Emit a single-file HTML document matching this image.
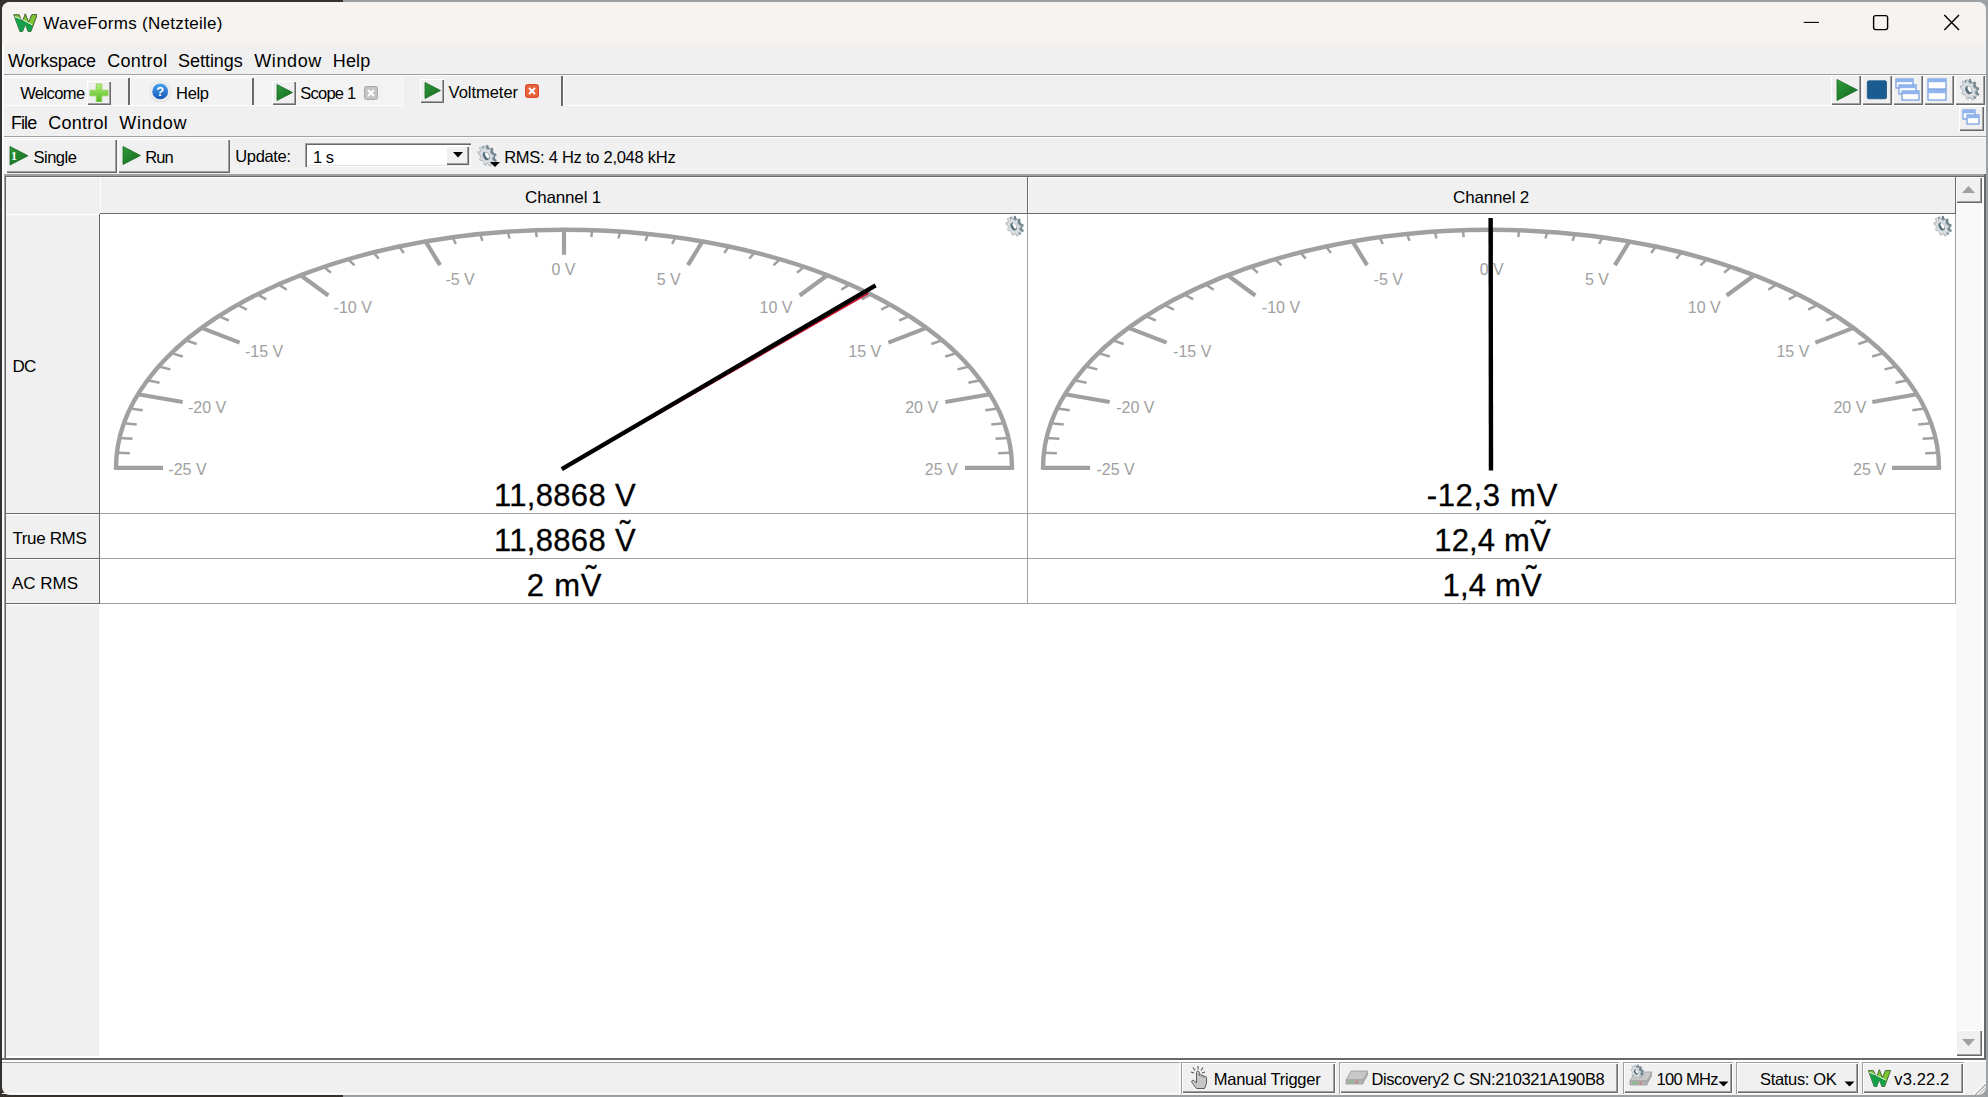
<!DOCTYPE html>
<html lang="de"><head><meta charset="utf-8"><title>WaveForms (Netzteile)</title>
<style>
html,body{margin:0;padding:0}
body{width:1988px;height:1097px;overflow:hidden;position:relative;background:#9da1a4;font-family:"Liberation Sans",sans-serif;}
.a{position:absolute;box-sizing:border-box}
.t{position:absolute;white-space:pre;line-height:1;font-family:"Liberation Sans",sans-serif}
.rs{box-shadow:inset 1px 1px 0 #fff,inset -1px -1px 0 #696969,inset -2px -2px 0 #a0a0a0}
.rs1{box-shadow:inset 1px 1px 0 #fff,inset -1px -1px 0 #696969}
.sk1{box-shadow:inset 1px 1px 0 #a0a0a0,inset -1px -1px 0 #fff}
.sk{box-shadow:inset 1px 1px 0 #a0a0a0,inset 2px 2px 0 #696969,inset -1px -1px 0 #fff,inset -2px -2px 0 #e3e3e3}
.td{position:absolute;letter-spacing:0}
svg text{font-family:"Liberation Sans",sans-serif}
</style></head>
<body>
<div class="a " style="left:0px;top:0px;width:343px;height:1097px;background:#37312d;"></div>
<div class="a " style="left:2px;top:2px;width:1984px;height:1093px;background:#f0f0f0;border-radius:8px;"></div>
<div class="a " style="left:2px;top:2px;width:1984px;height:42px;background:#f6f3f1;border-radius:8px 8px 0 0;"></div>
<svg class="a" style="left:12.5px;top:12.8px" width="24.7" height="19" viewBox="-0.5 -0.5 24.7 19"><defs><clipPath id="wc1"><polygon points="0.3,1.2 5.6,1.2 8.7,8.6 11.85,0.2 15.1,8.6 18.3,1.2 23.7,1.0 17.4,18 14.6,18 11.85,10.6 9.1,18 6.4,18"/></clipPath></defs><polygon points="0.3,1.2 5.6,1.2 8.7,8.6 11.85,0.2 15.1,8.6 18.3,1.2 23.7,1.0 17.4,18 14.6,18 11.85,10.6 9.1,18 6.4,18" fill="#7cc52f" stroke="#44603a" stroke-width="1" stroke-linejoin="round"/><g clip-path="url(#wc1)"><polygon points="0,3.2 3.8,4.2 9.5,6.6 18.5,11.4 18.5,19 0,19" fill="#14a04a"/><polyline points="0,3.0 3.8,4.0 9.5,6.4 18.5,11.2" stroke="#fff" stroke-width="0.9" fill="none"/></g></svg>
<span class="t" style="left:43.30px;top:15.00px;font-size:17px;color:#000;letter-spacing:0.303px;">WaveForms (Netzteile)</span>
<svg class="a" style="left:1795px;top:8px" width="180" height="30" viewBox="0 0 180 30"><line x1="8.7" y1="14.4" x2="24" y2="14.4" stroke="#000" stroke-width="1.1"/><rect x="78.6" y="7.6" width="14" height="14" rx="2" fill="none" stroke="#000" stroke-width="1.4"/><path d="M149.3 7.1 L164 21.9 M164 7.1 L149.3 21.9" stroke="#000" stroke-width="1.4" fill="none"/></svg>
<span class="t" style="left:8.10px;top:51.80px;font-size:18px;color:#000;letter-spacing:-0.210px;">Workspace</span>
<span class="t" style="left:107.20px;top:51.80px;font-size:18px;color:#000;letter-spacing:0.331px;">Control</span>
<span class="t" style="left:178.00px;top:51.80px;font-size:18px;color:#000;letter-spacing:-0.032px;">Settings</span>
<span class="t" style="left:254.20px;top:51.80px;font-size:18px;color:#000;letter-spacing:0.618px;">Window</span>
<span class="t" style="left:332.70px;top:51.80px;font-size:18px;color:#000;letter-spacing:0.196px;">Help</span>
<div class="a " style="left:2px;top:74px;width:1984px;height:1px;background:#a0a0a0;"></div>
<div class="a " style="left:2px;top:75px;width:1984px;height:1px;background:#fff;"></div>
<div class="a " style="left:4px;top:77px;width:399px;height:1px;background:#fff;"></div>
<div class="a " style="left:7px;top:78px;width:396px;height:27px;background:#f2f2f2;"></div>
<span class="t" style="left:20.20px;top:85.00px;font-size:16.5px;color:#000;letter-spacing:-0.597px;">Welcome</span>
<div class="a rs" style="left:87px;top:81px;width:24px;height:24px;background:#f0f0f0;"></div>
<svg class="a" style="left:89px;top:83px" width="20" height="19" viewBox="0 0 20 19"><defs><linearGradient id="gp" x1="0" y1="0" x2="0" y2="1"><stop offset="0" stop-color="#b6ec7a"/><stop offset="1" stop-color="#4fb81e"/></linearGradient></defs><path d="M7.2 1 h5.6 v6.2 h6.2 v5.6 h-6.2 v6.2 h-5.6 v-6.2 h-6.2 v-5.6 h6.2z" fill="url(#gp)" stroke="#8fd455" stroke-width="0.9" stroke-linejoin="round"/></svg>
<div class="a " style="left:128px;top:78px;width:2px;height:27px;background:#696969;"></div>
<div class="a " style="left:130px;top:78px;width:1px;height:27px;background:#fff;"></div>
<svg class="a" style="left:149px;top:80px" width="23" height="23" viewBox="0 0 23 23"><defs><linearGradient id="gh" x1="0" y1="0" x2="0" y2="1"><stop offset="0" stop-color="#4aa4ee"/><stop offset="1" stop-color="#1656b8"/></linearGradient></defs><circle cx="11.4" cy="11.6" r="11" fill="#e4e4e4"/><circle cx="11.4" cy="11" r="10" fill="#efefef"/><circle cx="11.2" cy="11.4" r="7.9" fill="url(#gh)"/><text x="11.2" y="16.2" font-size="13" font-weight="bold" fill="#fff" text-anchor="middle">?</text></svg>
<span class="t" style="left:176.10px;top:85.00px;font-size:16.5px;color:#000;letter-spacing:-0.384px;">Help</span>
<div class="a " style="left:252px;top:78px;width:2px;height:27px;background:#696969;"></div>
<div class="a " style="left:254px;top:78px;width:1px;height:27px;background:#fff;"></div>
<div class="a " style="left:254px;top:77px;width:149px;height:29px;background:#f3f3f3;box-shadow:inset -1px -1px 0 #fafafa;"></div>
<div class="a rs" style="left:272px;top:81px;width:24px;height:24px;background:#f0f0f0;"></div>
<svg class="a" style="left:276px;top:84px" width="18" height="18" viewBox="0 0 18 18"><defs><linearGradient id="gg1" x1="0" y1="0" x2="1" y2="1"><stop offset="0" stop-color="#2e9a38"/><stop offset="1" stop-color="#156a20"/></linearGradient></defs><polygon points="1,0.5 16.5,8.5 1,16.5" fill="url(#gg1)" stroke="#1c6a26" stroke-width="0.8" stroke-linejoin="round"/></svg>
<span class="t" style="left:300.30px;top:85.00px;font-size:16.5px;color:#000;letter-spacing:-0.760px;">Scope 1</span>
<svg class="a" style="left:364px;top:86px" width="14" height="14" viewBox="0 0 14 14"><rect x="0.5" y="0.5" width="13" height="13" rx="2" fill="#c4c4c4" stroke="#a8a8a8"/><path d="M4 4 L10 10 M10 4 L4 10" stroke="#fff" stroke-width="2"/></svg>
<div class="a rs" style="left:420px;top:79px;width:24px;height:24px;background:#f0f0f0;"></div>
<svg class="a" style="left:424px;top:82px" width="18" height="18" viewBox="0 0 18 18"><defs><linearGradient id="gg2" x1="0" y1="0" x2="1" y2="1"><stop offset="0" stop-color="#2e9a38"/><stop offset="1" stop-color="#156a20"/></linearGradient></defs><polygon points="1,0.5 16.5,8.5 1,16.5" fill="url(#gg2)" stroke="#1c6a26" stroke-width="0.8" stroke-linejoin="round"/></svg>
<span class="t" style="left:448.60px;top:84.00px;font-size:16.5px;color:#000;letter-spacing:-0.027px;">Voltmeter</span>
<svg class="a" style="left:525px;top:84px" width="14" height="14" viewBox="0 0 14 14"><rect x="0.5" y="0.5" width="13" height="13" rx="2" fill="#e8623c" stroke="#d8482a"/><path d="M4 4 L10 10 M10 4 L4 10" stroke="#fff" stroke-width="2"/></svg>
<div class="a " style="left:561px;top:76px;width:2px;height:30px;background:#696969;"></div>
<div class="a " style="left:563px;top:76px;width:1px;height:30px;background:#fff;"></div>
<div class="a rs" style="left:1831px;top:75px;width:30px;height:30px;background:#f0f0f0;"></div>
<div class="a rs" style="left:1862px;top:75px;width:30px;height:30px;background:#f0f0f0;"></div>
<div class="a rs" style="left:1893px;top:75px;width:30px;height:30px;background:#f0f0f0;"></div>
<div class="a rs" style="left:1924px;top:75px;width:30px;height:30px;background:#f0f0f0;"></div>
<div class="a rs" style="left:1955px;top:75px;width:30px;height:30px;background:#f0f0f0;"></div>
<svg class="a" style="left:1836px;top:79px" width="23" height="23" viewBox="0 0 23 23"><defs><linearGradient id="gg3" x1="0" y1="0" x2="1" y2="1"><stop offset="0" stop-color="#2e9a38"/><stop offset="1" stop-color="#156a20"/></linearGradient></defs><polygon points="1,0.5 21.5,11.0 1,21.5" fill="url(#gg3)" stroke="#1c6a26" stroke-width="0.8" stroke-linejoin="round"/></svg>
<svg class="a" style="left:1866px;top:80px" width="22" height="20" viewBox="0 0 22 20"><rect x="1.3" y="0.8" width="19.2" height="18" rx="1.5" fill="#1b5c90" stroke="#1a5484" stroke-width="0.8"/></svg>
<svg class="a" style="left:1895px;top:78px" width="26" height="25" viewBox="0 0 26 25"><rect x="1" y="1" width="17" height="9" fill="#fff" stroke="#6f9ae0" stroke-width="1.2"/><rect x="1" y="1" width="17" height="3.2" fill="#8fb4ee"/><rect x="4" y="7" width="17" height="9" fill="#fff" stroke="#6f9ae0" stroke-width="1.2"/><rect x="4" y="7" width="17" height="3.2" fill="#8fb4ee"/><rect x="7" y="13" width="17" height="9" fill="#fff" stroke="#6f9ae0" stroke-width="1.2"/><rect x="7" y="13" width="17" height="3.2" fill="#8fb4ee"/></svg>
<svg class="a" style="left:1927px;top:78px" width="22" height="25" viewBox="0 0 22 25"><rect x="1" y="1" width="18" height="10" fill="#fff" stroke="#6f9ae0" stroke-width="1.2"/><rect x="1" y="1" width="18" height="3.2" fill="#8fb4ee"/><rect x="1" y="12" width="18" height="10" fill="#fff" stroke="#6f9ae0" stroke-width="1.2"/><rect x="1" y="12" width="18" height="3.2" fill="#8fb4ee"/></svg>
<svg class="a" style="left:1958px;top:78px" width="24" height="23" viewBox="0 0 24 23"><g transform="translate(13.3,10.9) rotate(-28) scale(7.4399999999999995,10.809999999999999)"><path d="M0.780 0.000 L0.774 0.098 L0.981 0.194 L0.908 0.419 L0.684 0.376 L0.598 0.501 L0.530 0.572 L0.627 0.779 L0.426 0.905 L0.282 0.727 L0.135 0.768 L0.038 0.779 L-0.021 1.000 L-0.255 0.967 L-0.251 0.738 L-0.390 0.675 L-0.472 0.621 L-0.659 0.752 L-0.817 0.576 L-0.667 0.404 L-0.733 0.267 L-0.761 0.173 L-0.988 0.153 L-0.996 -0.084 L-0.771 -0.119 L-0.733 -0.267 L-0.694 -0.357 L-0.855 -0.518 L-0.710 -0.705 L-0.514 -0.587 L-0.390 -0.675 L-0.302 -0.719 L-0.322 -0.947 L-0.091 -0.996 L-0.016 -0.780 L0.135 -0.768 L0.231 -0.745 L0.362 -0.932 L0.571 -0.821 L0.489 -0.608 L0.598 -0.501 L0.656 -0.423 L0.876 -0.482 L0.965 -0.262 L0.765 -0.152Z" fill="#72848f"/></g><g transform="translate(10.7,12.0) rotate(-28) scale(7.4399999999999995,10.809999999999999)"><path d="M0.780 0.000 L0.774 0.098 L0.981 0.194 L0.908 0.419 L0.684 0.376 L0.598 0.501 L0.530 0.572 L0.627 0.779 L0.426 0.905 L0.282 0.727 L0.135 0.768 L0.038 0.779 L-0.021 1.000 L-0.255 0.967 L-0.251 0.738 L-0.390 0.675 L-0.472 0.621 L-0.659 0.752 L-0.817 0.576 L-0.667 0.404 L-0.733 0.267 L-0.761 0.173 L-0.988 0.153 L-0.996 -0.084 L-0.771 -0.119 L-0.733 -0.267 L-0.694 -0.357 L-0.855 -0.518 L-0.710 -0.705 L-0.514 -0.587 L-0.390 -0.675 L-0.302 -0.719 L-0.322 -0.947 L-0.091 -0.996 L-0.016 -0.780 L0.135 -0.768 L0.231 -0.745 L0.362 -0.932 L0.571 -0.821 L0.489 -0.608 L0.598 -0.501 L0.656 -0.423 L0.876 -0.482 L0.965 -0.262 L0.765 -0.152Z" fill="#d9dde0" stroke="#9aa6ae" stroke-width="0.07"/><ellipse cx="0.0" cy="0" rx="0.42" ry="0.40" fill="#566e7c"/><ellipse cx="0.16" cy="-0.02" rx="0.22" ry="0.30" fill="#fff"/></g></svg>
<div class="a " style="left:4px;top:105px;width:399px;height:1px;background:#fff;"></div>
<div class="a " style="left:563px;top:105px;width:1423px;height:1px;background:#fff;"></div>
<span class="t" style="left:10.90px;top:114.00px;font-size:18px;color:#000;letter-spacing:-0.899px;">File</span>
<span class="t" style="left:48.30px;top:114.00px;font-size:18px;color:#000;letter-spacing:0.248px;">Control</span>
<span class="t" style="left:119.30px;top:114.00px;font-size:18px;color:#000;letter-spacing:0.618px;">Window</span>
<div class="a rs" style="left:1959px;top:106px;width:25px;height:25px;background:#f0f0f0;"></div>
<svg class="a" style="left:1962px;top:109px" width="20" height="18" viewBox="0 0 20 18"><rect x="1" y="1" width="12" height="9" fill="#fff" stroke="#6f9ae0" stroke-width="1.2"/><rect x="1" y="1" width="12" height="3.2" fill="#8fb4ee"/><rect x="5" y="6" width="12" height="9" fill="#fff" stroke="#6f9ae0" stroke-width="1.2"/><rect x="5" y="6" width="12" height="3.2" fill="#8fb4ee"/></svg>
<div class="a " style="left:2px;top:136px;width:1984px;height:1px;background:#a0a0a0;"></div>
<div class="a " style="left:2px;top:137px;width:1984px;height:1px;background:#fff;"></div>
<div class="a rs" style="left:6px;top:139px;width:111px;height:34px;background:#f0f0f0;"></div>
<div class="a rs" style="left:118px;top:139px;width:112px;height:34px;background:#f0f0f0;"></div>
<svg class="a" style="left:9px;top:146px" width="20.5" height="20.5" viewBox="0 0 20.5 20.5"><defs><linearGradient id="gg4" x1="0" y1="0" x2="1" y2="1"><stop offset="0" stop-color="#2e9a38"/><stop offset="1" stop-color="#156a20"/></linearGradient></defs><polygon points="1,0.5 19.0,9.75 1,19.0" fill="url(#gg4)" stroke="#1c6a26" stroke-width="0.8" stroke-linejoin="round"/></svg>
<svg class="a" style="left:9px;top:148px" width="12" height="14" viewBox="0 0 12 14"><text x="2" y="11.5" font-size="12" font-weight="bold" fill="#fff" style="font-family:'Liberation Serif',serif">1</text></svg>
<span class="t" style="left:33.50px;top:149.00px;font-size:16.5px;color:#000;letter-spacing:-0.498px;">Single</span>
<svg class="a" style="left:122px;top:146px" width="20" height="20" viewBox="0 0 20 20"><defs><linearGradient id="gg5" x1="0" y1="0" x2="1" y2="1"><stop offset="0" stop-color="#2e9a38"/><stop offset="1" stop-color="#156a20"/></linearGradient></defs><polygon points="1,0.5 18.5,9.5 1,18.5" fill="url(#gg5)" stroke="#1c6a26" stroke-width="0.8" stroke-linejoin="round"/></svg>
<span class="t" style="left:145.20px;top:149.00px;font-size:16.5px;color:#000;letter-spacing:-0.848px;">Run</span>
<span class="t" style="left:235.20px;top:148.00px;font-size:16.5px;color:#000;letter-spacing:-0.319px;">Update:</span>
<div class="a sk" style="left:305px;top:143px;width:166px;height:24px;background:#fff;"></div>
<div class="a rs" style="left:446px;top:146px;width:23px;height:19px;background:#f0f0f0;"></div>
<svg class="a" style="left:452px;top:151px" width="12" height="8" viewBox="0 0 12 8"><polygon points="1,1 11,1 6,6.5" fill="#000"/></svg>
<span class="t" style="left:312.90px;top:149.00px;font-size:16.5px;color:#000;letter-spacing:-0.415px;">1 s</span>
<svg class="a" style="left:476px;top:144px" width="23" height="23" viewBox="0 0 23 23"><g transform="translate(12.8,10.9) rotate(-28) scale(7.13,10.809999999999999)"><path d="M0.780 0.000 L0.774 0.098 L0.981 0.194 L0.908 0.419 L0.684 0.376 L0.598 0.501 L0.530 0.572 L0.627 0.779 L0.426 0.905 L0.282 0.727 L0.135 0.768 L0.038 0.779 L-0.021 1.000 L-0.255 0.967 L-0.251 0.738 L-0.390 0.675 L-0.472 0.621 L-0.659 0.752 L-0.817 0.576 L-0.667 0.404 L-0.733 0.267 L-0.761 0.173 L-0.988 0.153 L-0.996 -0.084 L-0.771 -0.119 L-0.733 -0.267 L-0.694 -0.357 L-0.855 -0.518 L-0.710 -0.705 L-0.514 -0.587 L-0.390 -0.675 L-0.302 -0.719 L-0.322 -0.947 L-0.091 -0.996 L-0.016 -0.780 L0.135 -0.768 L0.231 -0.745 L0.362 -0.932 L0.571 -0.821 L0.489 -0.608 L0.598 -0.501 L0.656 -0.423 L0.876 -0.482 L0.965 -0.262 L0.765 -0.152Z" fill="#72848f"/></g><g transform="translate(10.2,12.0) rotate(-28) scale(7.13,10.809999999999999)"><path d="M0.780 0.000 L0.774 0.098 L0.981 0.194 L0.908 0.419 L0.684 0.376 L0.598 0.501 L0.530 0.572 L0.627 0.779 L0.426 0.905 L0.282 0.727 L0.135 0.768 L0.038 0.779 L-0.021 1.000 L-0.255 0.967 L-0.251 0.738 L-0.390 0.675 L-0.472 0.621 L-0.659 0.752 L-0.817 0.576 L-0.667 0.404 L-0.733 0.267 L-0.761 0.173 L-0.988 0.153 L-0.996 -0.084 L-0.771 -0.119 L-0.733 -0.267 L-0.694 -0.357 L-0.855 -0.518 L-0.710 -0.705 L-0.514 -0.587 L-0.390 -0.675 L-0.302 -0.719 L-0.322 -0.947 L-0.091 -0.996 L-0.016 -0.780 L0.135 -0.768 L0.231 -0.745 L0.362 -0.932 L0.571 -0.821 L0.489 -0.608 L0.598 -0.501 L0.656 -0.423 L0.876 -0.482 L0.965 -0.262 L0.765 -0.152Z" fill="#d9dde0" stroke="#9aa6ae" stroke-width="0.07"/><ellipse cx="0.0" cy="0" rx="0.42" ry="0.40" fill="#566e7c"/><ellipse cx="0.16" cy="-0.02" rx="0.22" ry="0.30" fill="#fff"/></g></svg>
<svg class="a" style="left:489px;top:161px" width="12" height="7" viewBox="0 0 12 7"><polygon points="1,1 11,1 6,6" fill="#000"/></svg>
<span class="t" style="left:504.20px;top:149.00px;font-size:16.5px;color:#000;letter-spacing:-0.262px;">RMS: 4 Hz to 2,048 kHz</span>
<div class="a " style="left:2px;top:44px;width:2px;height:1018px;background:#fcfcfc;"></div>
<div class="a " style="left:4px;top:174px;width:1982px;height:886px;background:#fff;"></div>
<div class="a " style="left:4px;top:174px;width:1982px;height:2px;background:#a0a0a0;"></div>
<div class="a " style="left:4px;top:176px;width:1982px;height:1px;background:#696969;"></div>
<div class="a " style="left:4px;top:174px;width:1px;height:884px;background:#a0a0a0;"></div>
<div class="a " style="left:5px;top:176px;width:1px;height:882px;background:#696969;"></div>
<div class="a " style="left:2px;top:1058px;width:1984px;height:2px;background:#696969;"></div>
<div class="a " style="left:1984px;top:174px;width:2px;height:886px;background:#696969;"></div>
<div class="a " style="left:6px;top:177px;width:1950px;height:36px;background:#f0f0f0;"></div>
<div class="a " style="left:6px;top:177px;width:1950px;height:1px;background:#fff;"></div>
<div class="a " style="left:6px;top:213px;width:93px;height:843px;background:#f0f0f0;"></div>
<div class="a " style="left:100px;top:213px;width:1856px;height:1px;background:#696969;"></div>
<div class="a " style="left:99px;top:214px;width:1px;height:390px;background:#696969;"></div>
<div class="a " style="left:100px;top:177px;width:1px;height:36px;background:#fff;"></div>
<div class="a " style="left:6px;top:214px;width:93px;height:1px;background:#fff;"></div>
<div class="a " style="left:1027px;top:177px;width:1px;height:36px;background:#696969;"></div>
<div class="a " style="left:1028px;top:177px;width:1px;height:36px;background:#fff;"></div>
<div class="a " style="left:1955px;top:177px;width:1px;height:36px;background:#696969;"></div>
<div class="a " style="left:6px;top:513px;width:93px;height:1px;background:#696969;"></div>
<div class="a " style="left:6px;top:514px;width:93px;height:1px;background:#fff;"></div>
<div class="a " style="left:100px;top:513px;width:1856px;height:1px;background:#a0a0a0;"></div>
<div class="a " style="left:6px;top:558px;width:93px;height:1px;background:#696969;"></div>
<div class="a " style="left:6px;top:559px;width:93px;height:1px;background:#fff;"></div>
<div class="a " style="left:100px;top:558px;width:1856px;height:1px;background:#a0a0a0;"></div>
<div class="a " style="left:6px;top:603px;width:93px;height:1px;background:#696969;"></div>
<div class="a " style="left:6px;top:604px;width:93px;height:1px;background:#fff;"></div>
<div class="a " style="left:100px;top:603px;width:1856px;height:1px;background:#a0a0a0;"></div>
<div class="a " style="left:1027px;top:214px;width:1px;height:390px;background:#a0a0a0;"></div>
<div class="a " style="left:1955px;top:214px;width:1px;height:390px;background:#a0a0a0;"></div>
<span class="t" style="left:525.09px;top:189.00px;font-size:17px;color:#000;letter-spacing:-0.161px;">Channel 1</span>
<span class="t" style="left:1453.09px;top:189.00px;font-size:17px;color:#000;letter-spacing:-0.161px;">Channel 2</span>
<span class="t" style="left:12.60px;top:358.00px;font-size:17px;color:#000;letter-spacing:-0.932px;">DC</span>
<span class="t" style="left:12.40px;top:530.00px;font-size:17px;color:#000;letter-spacing:-0.357px;">True RMS</span>
<span class="t" style="left:12.00px;top:575.00px;font-size:17px;color:#000;">AC RMS</span>
<div class="a " style="left:1956px;top:177px;width:26px;height:879px;background:#f8f8f8;"></div>
<div class="a rs" style="left:1956px;top:177px;width:26px;height:26px;background:#f0f0f0;"></div>
<svg class="a" style="left:1961px;top:185px" width="16" height="9" viewBox="0 0 16 9"><polygon points="1,8 7.5,1 14,8" fill="#a0a0a0"/></svg>
<div class="a rs" style="left:1956px;top:1030px;width:26px;height:26px;background:#f0f0f0;"></div>
<svg class="a" style="left:1961px;top:1038px" width="16" height="9" viewBox="0 0 16 9"><polygon points="1,1 14,1 7.5,8" fill="#a0a0a0"/></svg>
<svg class="a" style="left:99.60000000000002px;top:214px" width="927" height="299" viewBox="0 0 927 299"><path d="M16.00 255.80 L16.00 253.80 A448.0 238.0 0 0 1 912.00 253.80 L912.00 255.80" fill="none" stroke="#a0a0a0" stroke-width="4.4"/><line x1="16.00" y1="253.80" x2="63.04" y2="253.80" stroke="#a0a0a0" stroke-width="4.2"/><text x="68.34" y="260.50" font-size="16" fill="#a0a0a0" text-anchor="start">-25 V</text><line x1="16.88" y1="238.86" x2="29.85" y2="239.29" stroke="#a0a0a0" stroke-width="2.5"/><line x1="19.53" y1="223.97" x2="32.42" y2="224.84" stroke="#a0a0a0" stroke-width="2.5"/><line x1="23.94" y1="209.20" x2="36.70" y2="210.50" stroke="#a0a0a0" stroke-width="2.5"/><line x1="30.07" y1="194.61" x2="42.66" y2="196.33" stroke="#a0a0a0" stroke-width="2.5"/><line x1="37.93" y1="180.25" x2="82.66" y2="187.98" stroke="#a0a0a0" stroke-width="4.2"/><text x="87.96" y="198.79" font-size="16" fill="#a0a0a0" text-anchor="start">-20 V</text><line x1="47.46" y1="166.19" x2="59.54" y2="168.73" stroke="#a0a0a0" stroke-width="2.5"/><line x1="58.64" y1="152.46" x2="70.39" y2="155.40" stroke="#a0a0a0" stroke-width="2.5"/><line x1="71.41" y1="139.14" x2="82.80" y2="142.47" stroke="#a0a0a0" stroke-width="2.5"/><line x1="85.74" y1="126.27" x2="96.71" y2="129.97" stroke="#a0a0a0" stroke-width="2.5"/><line x1="101.56" y1="113.91" x2="139.62" y2="128.60" stroke="#a0a0a0" stroke-width="4.2"/><text x="144.92" y="143.11" font-size="16" fill="#a0a0a0" text-anchor="start">-15 V</text><line x1="118.81" y1="102.09" x2="128.82" y2="106.49" stroke="#a0a0a0" stroke-width="2.5"/><line x1="137.42" y1="90.88" x2="146.89" y2="95.60" stroke="#a0a0a0" stroke-width="2.5"/><line x1="157.32" y1="80.31" x2="166.22" y2="85.34" stroke="#a0a0a0" stroke-width="2.5"/><line x1="178.43" y1="70.42" x2="186.72" y2="75.74" stroke="#a0a0a0" stroke-width="2.5"/><line x1="200.67" y1="61.25" x2="228.32" y2="81.47" stroke="#a0a0a0" stroke-width="4.2"/><text x="233.62" y="98.93" font-size="16" fill="#a0a0a0" text-anchor="start">-10 V</text><line x1="223.95" y1="52.85" x2="230.91" y2="58.68" stroke="#a0a0a0" stroke-width="2.5"/><line x1="248.17" y1="45.24" x2="254.43" y2="51.29" stroke="#a0a0a0" stroke-width="2.5"/><line x1="273.25" y1="38.45" x2="278.78" y2="44.70" stroke="#a0a0a0" stroke-width="2.5"/><line x1="299.08" y1="32.51" x2="303.86" y2="38.93" stroke="#a0a0a0" stroke-width="2.5"/><line x1="325.56" y1="27.45" x2="340.10" y2="51.22" stroke="#a0a0a0" stroke-width="4.2"/><text x="345.40" y="70.56" font-size="16" fill="#a0a0a0" text-anchor="start">-5 V</text><line x1="352.59" y1="23.28" x2="355.82" y2="29.96" stroke="#a0a0a0" stroke-width="2.5"/><line x1="380.05" y1="20.02" x2="382.49" y2="26.80" stroke="#a0a0a0" stroke-width="2.5"/><line x1="407.85" y1="17.68" x2="409.48" y2="24.52" stroke="#a0a0a0" stroke-width="2.5"/><line x1="435.87" y1="16.27" x2="436.69" y2="23.16" stroke="#a0a0a0" stroke-width="2.5"/><line x1="464.00" y1="15.80" x2="464.00" y2="40.79" stroke="#a0a0a0" stroke-width="4.2"/><text x="463.50" y="60.79" font-size="16" fill="#a0a0a0" text-anchor="middle">0 V</text><line x1="492.13" y1="16.27" x2="491.31" y2="23.16" stroke="#a0a0a0" stroke-width="2.5"/><line x1="520.15" y1="17.68" x2="518.52" y2="24.52" stroke="#a0a0a0" stroke-width="2.5"/><line x1="547.95" y1="20.02" x2="545.51" y2="26.80" stroke="#a0a0a0" stroke-width="2.5"/><line x1="575.41" y1="23.28" x2="572.18" y2="29.96" stroke="#a0a0a0" stroke-width="2.5"/><line x1="602.44" y1="27.45" x2="587.90" y2="51.22" stroke="#a0a0a0" stroke-width="4.2"/><text x="580.70" y="70.56" font-size="16" fill="#a0a0a0" text-anchor="end">5 V</text><line x1="628.92" y1="32.51" x2="624.14" y2="38.93" stroke="#a0a0a0" stroke-width="2.5"/><line x1="654.75" y1="38.45" x2="649.22" y2="44.70" stroke="#a0a0a0" stroke-width="2.5"/><line x1="679.83" y1="45.24" x2="673.57" y2="51.29" stroke="#a0a0a0" stroke-width="2.5"/><line x1="704.05" y1="52.85" x2="697.09" y2="58.68" stroke="#a0a0a0" stroke-width="2.5"/><line x1="727.33" y1="61.25" x2="699.68" y2="81.47" stroke="#a0a0a0" stroke-width="4.2"/><text x="692.48" y="98.93" font-size="16" fill="#a0a0a0" text-anchor="end">10 V</text><line x1="749.57" y1="70.42" x2="741.28" y2="75.74" stroke="#a0a0a0" stroke-width="2.5"/><line x1="770.68" y1="80.31" x2="761.78" y2="85.34" stroke="#a0a0a0" stroke-width="2.5"/><line x1="790.58" y1="90.88" x2="781.11" y2="95.60" stroke="#a0a0a0" stroke-width="2.5"/><line x1="809.19" y1="102.09" x2="799.18" y2="106.49" stroke="#a0a0a0" stroke-width="2.5"/><line x1="826.44" y1="113.91" x2="788.38" y2="128.60" stroke="#a0a0a0" stroke-width="4.2"/><text x="781.18" y="143.11" font-size="16" fill="#a0a0a0" text-anchor="end">15 V</text><line x1="842.26" y1="126.27" x2="831.29" y2="129.97" stroke="#a0a0a0" stroke-width="2.5"/><line x1="856.59" y1="139.14" x2="845.20" y2="142.47" stroke="#a0a0a0" stroke-width="2.5"/><line x1="869.36" y1="152.46" x2="857.61" y2="155.40" stroke="#a0a0a0" stroke-width="2.5"/><line x1="880.54" y1="166.19" x2="868.46" y2="168.73" stroke="#a0a0a0" stroke-width="2.5"/><line x1="890.07" y1="180.25" x2="845.34" y2="187.98" stroke="#a0a0a0" stroke-width="4.2"/><text x="838.14" y="198.79" font-size="16" fill="#a0a0a0" text-anchor="end">20 V</text><line x1="897.93" y1="194.61" x2="885.34" y2="196.33" stroke="#a0a0a0" stroke-width="2.5"/><line x1="904.06" y1="209.20" x2="891.30" y2="210.50" stroke="#a0a0a0" stroke-width="2.5"/><line x1="908.47" y1="223.97" x2="895.58" y2="224.84" stroke="#a0a0a0" stroke-width="2.5"/><line x1="911.12" y1="238.86" x2="898.15" y2="239.29" stroke="#a0a0a0" stroke-width="2.5"/><line x1="912.00" y1="253.80" x2="864.96" y2="253.80" stroke="#a0a0a0" stroke-width="4.2"/><text x="857.76" y="260.50" font-size="16" fill="#a0a0a0" text-anchor="end">25 V</text><line x1="464.00" y1="253.80" x2="768.35" y2="79.15" stroke="#c8102e" stroke-width="2"/><line x1="461.76" y1="255.11" x2="775.63" y2="71.40" stroke="#000" stroke-width="4.4"/></svg>
<svg class="a" style="left:1027.4px;top:214px" width="927" height="299" viewBox="0 0 927 299"><path d="M16.00 255.80 L16.00 253.80 A448.0 238.0 0 0 1 912.00 253.80 L912.00 255.80" fill="none" stroke="#a0a0a0" stroke-width="4.4"/><line x1="16.00" y1="253.80" x2="63.04" y2="253.80" stroke="#a0a0a0" stroke-width="4.2"/><text x="69.54" y="260.50" font-size="16" fill="#a0a0a0" text-anchor="start">-25 V</text><line x1="16.88" y1="238.86" x2="29.85" y2="239.29" stroke="#a0a0a0" stroke-width="2.5"/><line x1="19.53" y1="223.97" x2="32.42" y2="224.84" stroke="#a0a0a0" stroke-width="2.5"/><line x1="23.94" y1="209.20" x2="36.70" y2="210.50" stroke="#a0a0a0" stroke-width="2.5"/><line x1="30.07" y1="194.61" x2="42.66" y2="196.33" stroke="#a0a0a0" stroke-width="2.5"/><line x1="37.93" y1="180.25" x2="82.66" y2="187.98" stroke="#a0a0a0" stroke-width="4.2"/><text x="89.16" y="198.79" font-size="16" fill="#a0a0a0" text-anchor="start">-20 V</text><line x1="47.46" y1="166.19" x2="59.54" y2="168.73" stroke="#a0a0a0" stroke-width="2.5"/><line x1="58.64" y1="152.46" x2="70.39" y2="155.40" stroke="#a0a0a0" stroke-width="2.5"/><line x1="71.41" y1="139.14" x2="82.80" y2="142.47" stroke="#a0a0a0" stroke-width="2.5"/><line x1="85.74" y1="126.27" x2="96.71" y2="129.97" stroke="#a0a0a0" stroke-width="2.5"/><line x1="101.56" y1="113.91" x2="139.62" y2="128.60" stroke="#a0a0a0" stroke-width="4.2"/><text x="146.12" y="143.11" font-size="16" fill="#a0a0a0" text-anchor="start">-15 V</text><line x1="118.81" y1="102.09" x2="128.82" y2="106.49" stroke="#a0a0a0" stroke-width="2.5"/><line x1="137.42" y1="90.88" x2="146.89" y2="95.60" stroke="#a0a0a0" stroke-width="2.5"/><line x1="157.32" y1="80.31" x2="166.22" y2="85.34" stroke="#a0a0a0" stroke-width="2.5"/><line x1="178.43" y1="70.42" x2="186.72" y2="75.74" stroke="#a0a0a0" stroke-width="2.5"/><line x1="200.67" y1="61.25" x2="228.32" y2="81.47" stroke="#a0a0a0" stroke-width="4.2"/><text x="234.82" y="98.93" font-size="16" fill="#a0a0a0" text-anchor="start">-10 V</text><line x1="223.95" y1="52.85" x2="230.91" y2="58.68" stroke="#a0a0a0" stroke-width="2.5"/><line x1="248.17" y1="45.24" x2="254.43" y2="51.29" stroke="#a0a0a0" stroke-width="2.5"/><line x1="273.25" y1="38.45" x2="278.78" y2="44.70" stroke="#a0a0a0" stroke-width="2.5"/><line x1="299.08" y1="32.51" x2="303.86" y2="38.93" stroke="#a0a0a0" stroke-width="2.5"/><line x1="325.56" y1="27.45" x2="340.10" y2="51.22" stroke="#a0a0a0" stroke-width="4.2"/><text x="346.60" y="70.56" font-size="16" fill="#a0a0a0" text-anchor="start">-5 V</text><line x1="352.59" y1="23.28" x2="355.82" y2="29.96" stroke="#a0a0a0" stroke-width="2.5"/><line x1="380.05" y1="20.02" x2="382.49" y2="26.80" stroke="#a0a0a0" stroke-width="2.5"/><line x1="407.85" y1="17.68" x2="409.48" y2="24.52" stroke="#a0a0a0" stroke-width="2.5"/><line x1="435.87" y1="16.27" x2="436.69" y2="23.16" stroke="#a0a0a0" stroke-width="2.5"/><line x1="464.00" y1="15.80" x2="464.00" y2="40.79" stroke="#a0a0a0" stroke-width="4.2"/><text x="464.70" y="60.79" font-size="16" fill="#a0a0a0" text-anchor="middle">0 V</text><line x1="492.13" y1="16.27" x2="491.31" y2="23.16" stroke="#a0a0a0" stroke-width="2.5"/><line x1="520.15" y1="17.68" x2="518.52" y2="24.52" stroke="#a0a0a0" stroke-width="2.5"/><line x1="547.95" y1="20.02" x2="545.51" y2="26.80" stroke="#a0a0a0" stroke-width="2.5"/><line x1="575.41" y1="23.28" x2="572.18" y2="29.96" stroke="#a0a0a0" stroke-width="2.5"/><line x1="602.44" y1="27.45" x2="587.90" y2="51.22" stroke="#a0a0a0" stroke-width="4.2"/><text x="581.90" y="70.56" font-size="16" fill="#a0a0a0" text-anchor="end">5 V</text><line x1="628.92" y1="32.51" x2="624.14" y2="38.93" stroke="#a0a0a0" stroke-width="2.5"/><line x1="654.75" y1="38.45" x2="649.22" y2="44.70" stroke="#a0a0a0" stroke-width="2.5"/><line x1="679.83" y1="45.24" x2="673.57" y2="51.29" stroke="#a0a0a0" stroke-width="2.5"/><line x1="704.05" y1="52.85" x2="697.09" y2="58.68" stroke="#a0a0a0" stroke-width="2.5"/><line x1="727.33" y1="61.25" x2="699.68" y2="81.47" stroke="#a0a0a0" stroke-width="4.2"/><text x="693.68" y="98.93" font-size="16" fill="#a0a0a0" text-anchor="end">10 V</text><line x1="749.57" y1="70.42" x2="741.28" y2="75.74" stroke="#a0a0a0" stroke-width="2.5"/><line x1="770.68" y1="80.31" x2="761.78" y2="85.34" stroke="#a0a0a0" stroke-width="2.5"/><line x1="790.58" y1="90.88" x2="781.11" y2="95.60" stroke="#a0a0a0" stroke-width="2.5"/><line x1="809.19" y1="102.09" x2="799.18" y2="106.49" stroke="#a0a0a0" stroke-width="2.5"/><line x1="826.44" y1="113.91" x2="788.38" y2="128.60" stroke="#a0a0a0" stroke-width="4.2"/><text x="782.38" y="143.11" font-size="16" fill="#a0a0a0" text-anchor="end">15 V</text><line x1="842.26" y1="126.27" x2="831.29" y2="129.97" stroke="#a0a0a0" stroke-width="2.5"/><line x1="856.59" y1="139.14" x2="845.20" y2="142.47" stroke="#a0a0a0" stroke-width="2.5"/><line x1="869.36" y1="152.46" x2="857.61" y2="155.40" stroke="#a0a0a0" stroke-width="2.5"/><line x1="880.54" y1="166.19" x2="868.46" y2="168.73" stroke="#a0a0a0" stroke-width="2.5"/><line x1="890.07" y1="180.25" x2="845.34" y2="187.98" stroke="#a0a0a0" stroke-width="4.2"/><text x="839.34" y="198.79" font-size="16" fill="#a0a0a0" text-anchor="end">20 V</text><line x1="897.93" y1="194.61" x2="885.34" y2="196.33" stroke="#a0a0a0" stroke-width="2.5"/><line x1="904.06" y1="209.20" x2="891.30" y2="210.50" stroke="#a0a0a0" stroke-width="2.5"/><line x1="908.47" y1="223.97" x2="895.58" y2="224.84" stroke="#a0a0a0" stroke-width="2.5"/><line x1="911.12" y1="238.86" x2="898.15" y2="239.29" stroke="#a0a0a0" stroke-width="2.5"/><line x1="912.00" y1="253.80" x2="864.96" y2="253.80" stroke="#a0a0a0" stroke-width="4.2"/><text x="858.96" y="260.50" font-size="16" fill="#a0a0a0" text-anchor="end">25 V</text><line x1="464.00" y1="256.40" x2="463.64" y2="3.90" stroke="#000" stroke-width="4.4"/></svg>
<svg class="a" style="left:1004px;top:215px" width="22" height="22" viewBox="0 0 22 22"><g transform="translate(12.3,10.4) rotate(-28) scale(6.82,10.34)"><path d="M0.780 0.000 L0.774 0.098 L0.981 0.194 L0.908 0.419 L0.684 0.376 L0.598 0.501 L0.530 0.572 L0.627 0.779 L0.426 0.905 L0.282 0.727 L0.135 0.768 L0.038 0.779 L-0.021 1.000 L-0.255 0.967 L-0.251 0.738 L-0.390 0.675 L-0.472 0.621 L-0.659 0.752 L-0.817 0.576 L-0.667 0.404 L-0.733 0.267 L-0.761 0.173 L-0.988 0.153 L-0.996 -0.084 L-0.771 -0.119 L-0.733 -0.267 L-0.694 -0.357 L-0.855 -0.518 L-0.710 -0.705 L-0.514 -0.587 L-0.390 -0.675 L-0.302 -0.719 L-0.322 -0.947 L-0.091 -0.996 L-0.016 -0.780 L0.135 -0.768 L0.231 -0.745 L0.362 -0.932 L0.571 -0.821 L0.489 -0.608 L0.598 -0.501 L0.656 -0.423 L0.876 -0.482 L0.965 -0.262 L0.765 -0.152Z" fill="#72848f"/></g><g transform="translate(9.7,11.5) rotate(-28) scale(6.82,10.34)"><path d="M0.780 0.000 L0.774 0.098 L0.981 0.194 L0.908 0.419 L0.684 0.376 L0.598 0.501 L0.530 0.572 L0.627 0.779 L0.426 0.905 L0.282 0.727 L0.135 0.768 L0.038 0.779 L-0.021 1.000 L-0.255 0.967 L-0.251 0.738 L-0.390 0.675 L-0.472 0.621 L-0.659 0.752 L-0.817 0.576 L-0.667 0.404 L-0.733 0.267 L-0.761 0.173 L-0.988 0.153 L-0.996 -0.084 L-0.771 -0.119 L-0.733 -0.267 L-0.694 -0.357 L-0.855 -0.518 L-0.710 -0.705 L-0.514 -0.587 L-0.390 -0.675 L-0.302 -0.719 L-0.322 -0.947 L-0.091 -0.996 L-0.016 -0.780 L0.135 -0.768 L0.231 -0.745 L0.362 -0.932 L0.571 -0.821 L0.489 -0.608 L0.598 -0.501 L0.656 -0.423 L0.876 -0.482 L0.965 -0.262 L0.765 -0.152Z" fill="#d9dde0" stroke="#9aa6ae" stroke-width="0.07"/><ellipse cx="0.0" cy="0" rx="0.42" ry="0.40" fill="#566e7c"/><ellipse cx="0.16" cy="-0.02" rx="0.22" ry="0.30" fill="#fff"/></g></svg>
<svg class="a" style="left:1932px;top:215px" width="22" height="22" viewBox="0 0 22 22"><g transform="translate(12.3,10.4) rotate(-28) scale(6.82,10.34)"><path d="M0.780 0.000 L0.774 0.098 L0.981 0.194 L0.908 0.419 L0.684 0.376 L0.598 0.501 L0.530 0.572 L0.627 0.779 L0.426 0.905 L0.282 0.727 L0.135 0.768 L0.038 0.779 L-0.021 1.000 L-0.255 0.967 L-0.251 0.738 L-0.390 0.675 L-0.472 0.621 L-0.659 0.752 L-0.817 0.576 L-0.667 0.404 L-0.733 0.267 L-0.761 0.173 L-0.988 0.153 L-0.996 -0.084 L-0.771 -0.119 L-0.733 -0.267 L-0.694 -0.357 L-0.855 -0.518 L-0.710 -0.705 L-0.514 -0.587 L-0.390 -0.675 L-0.302 -0.719 L-0.322 -0.947 L-0.091 -0.996 L-0.016 -0.780 L0.135 -0.768 L0.231 -0.745 L0.362 -0.932 L0.571 -0.821 L0.489 -0.608 L0.598 -0.501 L0.656 -0.423 L0.876 -0.482 L0.965 -0.262 L0.765 -0.152Z" fill="#72848f"/></g><g transform="translate(9.7,11.5) rotate(-28) scale(6.82,10.34)"><path d="M0.780 0.000 L0.774 0.098 L0.981 0.194 L0.908 0.419 L0.684 0.376 L0.598 0.501 L0.530 0.572 L0.627 0.779 L0.426 0.905 L0.282 0.727 L0.135 0.768 L0.038 0.779 L-0.021 1.000 L-0.255 0.967 L-0.251 0.738 L-0.390 0.675 L-0.472 0.621 L-0.659 0.752 L-0.817 0.576 L-0.667 0.404 L-0.733 0.267 L-0.761 0.173 L-0.988 0.153 L-0.996 -0.084 L-0.771 -0.119 L-0.733 -0.267 L-0.694 -0.357 L-0.855 -0.518 L-0.710 -0.705 L-0.514 -0.587 L-0.390 -0.675 L-0.302 -0.719 L-0.322 -0.947 L-0.091 -0.996 L-0.016 -0.780 L0.135 -0.768 L0.231 -0.745 L0.362 -0.932 L0.571 -0.821 L0.489 -0.608 L0.598 -0.501 L0.656 -0.423 L0.876 -0.482 L0.965 -0.262 L0.765 -0.152Z" fill="#d9dde0" stroke="#9aa6ae" stroke-width="0.07"/><ellipse cx="0.0" cy="0" rx="0.42" ry="0.40" fill="#566e7c"/><ellipse cx="0.16" cy="-0.02" rx="0.22" ry="0.30" fill="#fff"/></g></svg>
<span class="t" style="left:494.00px;top:480.00px;font-size:31px;color:#000;letter-spacing:0.318px;-webkit-text-stroke:0.3px #000;">11,8868 V</span>
<span class="t" style="left:494.00px;top:525.00px;font-size:31px;color:#000;letter-spacing:0.318px;-webkit-text-stroke:0.3px #000;">11,8868 V<span class="td" style="right:5.49px;top:-7.75px">˜</span></span>
<span class="t" style="left:526.81px;top:570.00px;font-size:31px;color:#000;letter-spacing:0.744px;-webkit-text-stroke:0.3px #000;">2 mV<span class="td" style="right:5.92px;top:-7.75px">˜</span></span>
<span class="t" style="left:1426.65px;top:480.00px;font-size:31px;color:#000;letter-spacing:0.701px;-webkit-text-stroke:0.3px #000;">-12,3 mV</span>
<span class="t" style="left:1434.31px;top:525.00px;font-size:31px;color:#000;letter-spacing:0.156px;-webkit-text-stroke:0.3px #000;">12,4 mV<span class="td" style="right:5.33px;top:-7.75px">˜</span></span>
<span class="t" style="left:1442.61px;top:570.00px;font-size:31px;color:#000;letter-spacing:0.194px;-webkit-text-stroke:0.3px #000;">1,4 mV<span class="td" style="right:5.37px;top:-7.75px">˜</span></span>
<div class="a " style="left:3px;top:1060px;width:1983px;height:2px;background:#fff;"></div>
<div class="a " style="left:2px;top:1062px;width:1178px;height:32px;box-shadow:inset 0 1px 0 #a0a0a0,inset -1px -1px 0 #fff;"></div>
<div class="a sk1" style="left:1181px;top:1062px;width:155px;height:32px;"></div>
<div class="a rs" style="left:1182px;top:1063px;width:153px;height:30px;background:#f0f0f0;"></div>
<div class="a sk1" style="left:1339px;top:1062px;width:280px;height:32px;"></div>
<div class="a rs" style="left:1340px;top:1063px;width:278px;height:30px;background:#f0f0f0;"></div>
<div class="a sk1" style="left:1623px;top:1062px;width:110px;height:32px;"></div>
<div class="a rs" style="left:1624px;top:1063px;width:108px;height:30px;background:#f0f0f0;"></div>
<div class="a sk1" style="left:1736px;top:1062px;width:123px;height:32px;"></div>
<div class="a rs" style="left:1737px;top:1063px;width:121px;height:30px;background:#f0f0f0;"></div>
<div class="a sk1" style="left:1862px;top:1062px;width:102px;height:32px;"></div>
<div class="a rs" style="left:1863px;top:1063px;width:100px;height:30px;background:#f0f0f0;"></div>
<svg class="a" style="left:1190px;top:1065px" width="18" height="25" viewBox="0 0 18 25"><path d="M6.5 9 v9 l-2.5 -2.5 c-1.5 -1 -3 0.5 -2 2 l4.5 6 h8 l2 -5 v-6 c0 -1.5 -2.2 -1.5 -2.4 0 v-1 c0 -1.5 -2.3 -1.5 -2.4 0 v-1 c0 -1.5 -2.3 -1.5 -2.4 0 v-3 c0 -1.8 -2.8 -1.8 -2.8 0z" fill="#c6c6c6" stroke="#5c5c5c" stroke-width="1"/><path d="M8 1 v3.5 M3 2.5 l2 3 M13 2.5 l-2 3 M1 7 l3 1 M15 7 l-3 1" stroke="#555" stroke-width="1.1"/></svg>
<span class="t" style="left:1213.70px;top:1071.00px;font-size:16.5px;color:#000;letter-spacing:-0.229px;">Manual Trigger</span>
<svg class="a" style="left:1345px;top:1070px" width="24" height="15" viewBox="0 0 24 15"><polygon points="6,1 23,1 18,10 1,10" fill="#c8c8c8" stroke="#9a9a9a" stroke-width="0.8"/><polygon points="1,10 18,10 18,14 1,14" fill="#b4b4b4" stroke="#9a9a9a" stroke-width="0.8"/><polygon points="18,10 23,1 23,5 18,14" fill="#a8a8a8"/><rect x="3" y="11.5" width="6" height="1.2" fill="#6cc070"/><rect x="10" y="11.5" width="3" height="1.2" fill="#e06060"/></svg>
<span class="t" style="left:1371.40px;top:1071.00px;font-size:16.5px;color:#000;letter-spacing:-0.396px;">Discovery2 C SN:210321A190B8</span>
<svg class="a" style="left:1629px;top:1071px" width="24" height="15" viewBox="0 0 24 15"><polygon points="6,1 23,1 18,10 1,10" fill="#c8c8c8" stroke="#9a9a9a" stroke-width="0.8"/><polygon points="1,10 18,10 18,14 1,14" fill="#b4b4b4" stroke="#9a9a9a" stroke-width="0.8"/><polygon points="18,10 23,1 23,5 18,14" fill="#a8a8a8"/><rect x="3" y="11.5" width="6" height="1.2" fill="#6cc070"/><rect x="10" y="11.5" width="3" height="1.2" fill="#e06060"/></svg>
<svg class="a" style="left:1630px;top:1064px" width="15" height="15" viewBox="0 0 15 15"><g transform="translate(8.8,6.9) rotate(-28) scale(4.65,7.05)"><path d="M0.780 0.000 L0.774 0.098 L0.981 0.194 L0.908 0.419 L0.684 0.376 L0.598 0.501 L0.530 0.572 L0.627 0.779 L0.426 0.905 L0.282 0.727 L0.135 0.768 L0.038 0.779 L-0.021 1.000 L-0.255 0.967 L-0.251 0.738 L-0.390 0.675 L-0.472 0.621 L-0.659 0.752 L-0.817 0.576 L-0.667 0.404 L-0.733 0.267 L-0.761 0.173 L-0.988 0.153 L-0.996 -0.084 L-0.771 -0.119 L-0.733 -0.267 L-0.694 -0.357 L-0.855 -0.518 L-0.710 -0.705 L-0.514 -0.587 L-0.390 -0.675 L-0.302 -0.719 L-0.322 -0.947 L-0.091 -0.996 L-0.016 -0.780 L0.135 -0.768 L0.231 -0.745 L0.362 -0.932 L0.571 -0.821 L0.489 -0.608 L0.598 -0.501 L0.656 -0.423 L0.876 -0.482 L0.965 -0.262 L0.765 -0.152Z" fill="#72848f"/></g><g transform="translate(6.2,8.0) rotate(-28) scale(4.65,7.05)"><path d="M0.780 0.000 L0.774 0.098 L0.981 0.194 L0.908 0.419 L0.684 0.376 L0.598 0.501 L0.530 0.572 L0.627 0.779 L0.426 0.905 L0.282 0.727 L0.135 0.768 L0.038 0.779 L-0.021 1.000 L-0.255 0.967 L-0.251 0.738 L-0.390 0.675 L-0.472 0.621 L-0.659 0.752 L-0.817 0.576 L-0.667 0.404 L-0.733 0.267 L-0.761 0.173 L-0.988 0.153 L-0.996 -0.084 L-0.771 -0.119 L-0.733 -0.267 L-0.694 -0.357 L-0.855 -0.518 L-0.710 -0.705 L-0.514 -0.587 L-0.390 -0.675 L-0.302 -0.719 L-0.322 -0.947 L-0.091 -0.996 L-0.016 -0.780 L0.135 -0.768 L0.231 -0.745 L0.362 -0.932 L0.571 -0.821 L0.489 -0.608 L0.598 -0.501 L0.656 -0.423 L0.876 -0.482 L0.965 -0.262 L0.765 -0.152Z" fill="#d9dde0" stroke="#9aa6ae" stroke-width="0.07"/><ellipse cx="0.0" cy="0" rx="0.42" ry="0.40" fill="#566e7c"/><ellipse cx="0.16" cy="-0.02" rx="0.22" ry="0.30" fill="#fff"/></g></svg>
<span class="t" style="left:1656.60px;top:1071.00px;font-size:16.5px;color:#000;letter-spacing:-0.691px;">100 MHz</span>
<svg class="a" style="left:1718px;top:1081px" width="11" height="6" viewBox="0 0 11 6"><polygon points="0.5,0.5 10.5,0.5 5.5,5.5" fill="#000"/></svg>
<span class="t" style="left:1760.00px;top:1071.00px;font-size:16.5px;color:#000;letter-spacing:-0.324px;">Status: OK</span>
<svg class="a" style="left:1844px;top:1081px" width="11" height="6" viewBox="0 0 11 6"><polygon points="0.5,0.5 10.5,0.5 5.5,5.5" fill="#000"/></svg>
<svg class="a" style="left:1867.3px;top:1069px" width="24.7" height="18" viewBox="-0.5 -0.5 24.7 19"><defs><clipPath id="wc2"><polygon points="0.3,1.2 5.6,1.2 8.7,8.6 11.85,0.2 15.1,8.6 18.3,1.2 23.7,1.0 17.4,18 14.6,18 11.85,10.6 9.1,18 6.4,18"/></clipPath></defs><polygon points="0.3,1.2 5.6,1.2 8.7,8.6 11.85,0.2 15.1,8.6 18.3,1.2 23.7,1.0 17.4,18 14.6,18 11.85,10.6 9.1,18 6.4,18" fill="#7cc52f" stroke="#44603a" stroke-width="1" stroke-linejoin="round"/><g clip-path="url(#wc2)"><polygon points="0,3.2 3.8,4.2 9.5,6.6 18.5,11.4 18.5,19 0,19" fill="#14a04a"/><polyline points="0,3.0 3.8,4.0 9.5,6.4 18.5,11.2" stroke="#fff" stroke-width="0.9" fill="none"/></g></svg>
<span class="t" style="left:1894.30px;top:1071.00px;font-size:16.5px;color:#000;letter-spacing:0.143px;">v3.22.2</span>
<svg class="a" style="left:1966px;top:1075px" width="20" height="20" viewBox="0 0 20 20"><path d="M8 19.6 L20 7.6" stroke="#fff" stroke-width="1.4"/><path d="M9.4 20 L20 9.4" stroke="#a0a0a0" stroke-width="1.5"/><path d="M10.9 20 L20 10.9" stroke="#fff" stroke-width="1.2"/><path d="M12.4 20 L20 12.4" stroke="#c8c8c8" stroke-width="1.2"/></svg>
</body></html>
